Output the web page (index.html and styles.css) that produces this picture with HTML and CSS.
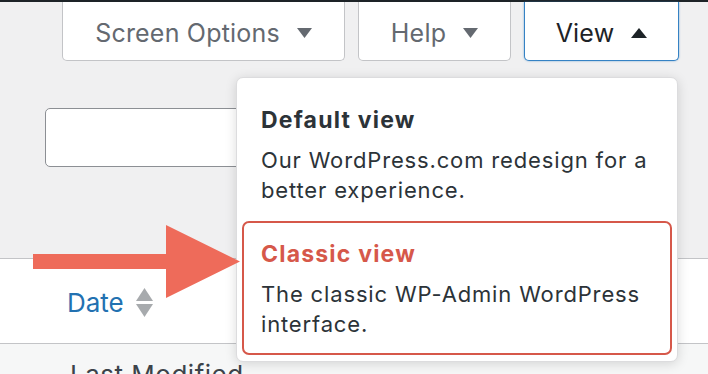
FILE: index.html
```html
<!DOCTYPE html>
<html lang="en">
<head>
<meta charset="utf-8">
<title>View switcher</title>
<link rel="stylesheet" href="styles.css">
</head>
<body>
<div class="topbar"></div>
<div class="screen-meta">
  <button class="meta-btn btn-screen">Screen Options
    <svg class="caret" width="15" height="10" viewBox="0 0 15 10"><polygon points="0,0 15,0 7.5,10"/></svg>
  </button>
  <button class="meta-btn btn-help">Help
    <svg class="caret" width="15" height="10" viewBox="0 0 15 10"><polygon points="0,0 15,0 7.5,10"/></svg>
  </button>
  <button class="meta-btn btn-view is-open">View
    <svg class="caret" width="16" height="10" viewBox="0 0 16 10"><polygon points="0,10 16,10 8,0"/></svg>
  </button>
</div>

<div class="content">
  <div class="search-box"></div>
  <div class="list-table">
    <div class="head-row">
      <a class="sort-link" href="#">Date
        <span class="sort-icons">
          <svg width="17" height="13" viewBox="0 0 17 13"><polygon points="0,13 17,13 8.5,0"/></svg>
          <svg width="17" height="13" viewBox="0 0 17 13"><polygon points="0,0 17,0 8.5,13"/></svg>
        </span>
      </a>
    </div>
    <div class="body-row">Last Modified</div>
  </div>
</div>

<div class="view-menu">
  <div class="view-item">
    <div class="view-title">Default view</div>
    <div class="view-desc">Our WordPress.com redesign for a better experience.</div>
  </div>
  <div class="view-item is-selected">
    <div class="view-title">Classic view</div>
    <div class="view-desc">The classic WP-Admin WordPress interface.</div>
  </div>
</div>

<svg class="callout-arrow" width="207" height="73" viewBox="0 0 207 73">
  <polygon points="0,29 133,29 133,0 207,36.5 133,73 133,44 0,44"/>
</svg>
</body>
</html>
```

FILE: styles.css
```css
* { box-sizing: border-box; }
html, body { margin: 0; padding: 0; }
body {
  width: 708px;
  height: 374px;
  overflow: hidden;
  background: #f0f0f1;
  font-family: Inter, "Noto Sans", "Liberation Sans", sans-serif;
  color: #1d2327;
  position: relative;
}
.topbar {
  height: 2px;
  background: #1d2327;
}
.screen-meta {
  display: flex;
  justify-content: flex-end;
  gap: 13px;
  padding-right: 29px;
}
.meta-btn {
  height: 59px;
  display: flex;
  align-items: center;
  justify-content: center;
  gap: 17px;
  background: #fff;
  border: 1px solid #c3c4c7;
  border-top: none;
  border-radius: 0 0 5px 5px;
  font-family: inherit;
  font-size: 25px;
  letter-spacing: 0.2px;
  color: #646970;
  padding: 4px 0 0;
  margin: 0;
}
.meta-btn .caret { fill: #646970; }
.btn-screen { width: 283px; }
.btn-help { width: 153px; }
.btn-view { width: 155px; }
.btn-view.is-open {
  color: #1d2327;
  border-color: #3582c4;
  box-shadow: 0 0 2px 0 rgba(53,130,196,.7);
}
.btn-view .caret { fill: #1d2327; }

.content {
  padding-top: 47px;
}
.search-box {
  margin-left: 45px;
  width: 240px;
  height: 59px;
  background: #fff;
  border: 1px solid #8c8f94;
  border-radius: 5px;
}
.list-table {
  margin-top: 91px;
  border-top: 1px solid #c3c4c7;
}
.head-row {
  height: 85px;
  background: #fff;
  border-bottom: 1px solid #c3c4c7;
  padding: 28px 0 0 67px;
}
.sort-link {
  display: inline-flex;
  align-items: center;
  gap: 12px;
  font-size: 26px;
  color: #2271b1;
  text-decoration: none;
}
.sort-icons {
  display: flex;
  flex-direction: column;
  gap: 3px;
  fill: #a7aaad;
}
.sort-icons svg { display: block; }
.body-row {
  background: #f6f7f7;
  height: 30px;
  overflow: hidden;
  padding: 15px 0 0 70px;
  font-size: 26px;
  line-height: 32px;
  letter-spacing: 0.5px;
  color: #3c434a;
}

.view-menu {
  position: absolute;
  left: 236px;
  top: 77px;
  width: 442px;
  height: 285px;
  background: #fff;
  border: 1px solid #dcdcde;
  border-radius: 7px;
  padding: 0 5px;
  box-shadow: 0 2px 12px rgba(0,0,0,.14);
}
.view-item {
  padding: 28px 19px 0;
}
.view-item.is-selected {
  margin-top: 16px;
  border: 2px solid #d6584a;
  border-radius: 7px;
  padding: 17px 17px 14px;
}
.view-title {
  font-size: 23px;
  line-height: 28px;
  font-weight: 700;
  letter-spacing: 1.2px;
  color: #2c3338;
}
.is-selected .view-title { color: #d6584a; }
.view-desc {
  margin-top: 11px;
  font-size: 22px;
  line-height: 30px;
  letter-spacing: 0.85px;
  color: #2c3338;
}
.callout-arrow {
  position: absolute;
  left: 33px;
  top: 225px;
  fill: #ee6b5a;
}
```
